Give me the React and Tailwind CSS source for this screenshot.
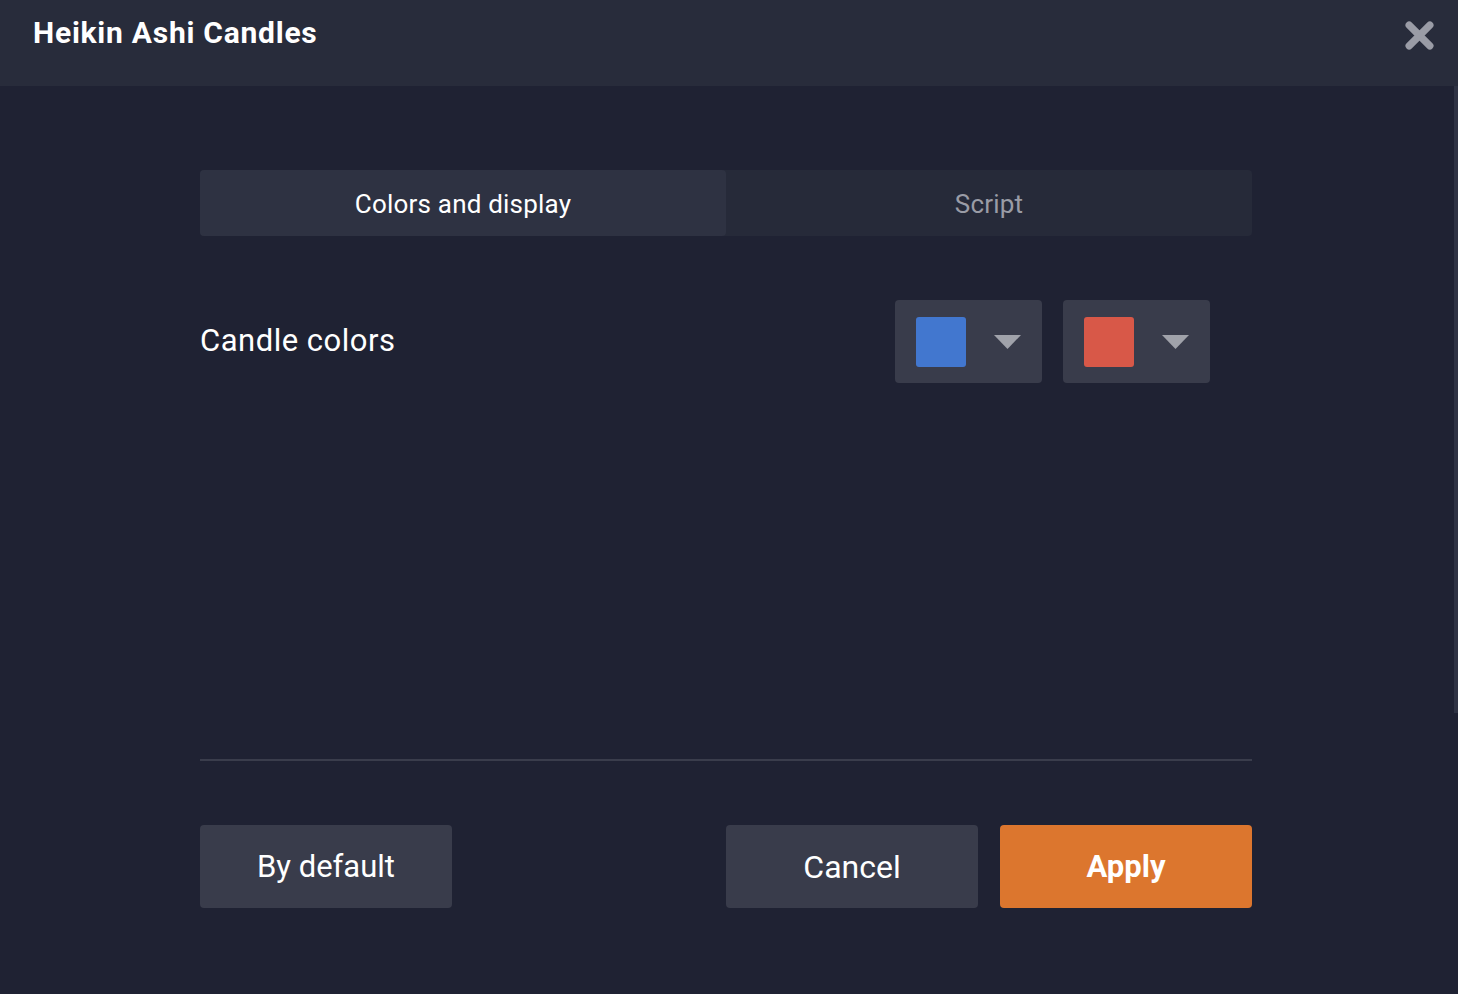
import React from "react";

function Swatch({ color }) {
  return (
    <div className="flex h-[83px] w-[147px] items-center rounded-[4px] bg-[#393c4b] pl-[21px]">
      <div className={`h-[50px] w-[50px] rounded-[3px] ${color}`} />
      <svg className="ml-[28px]" width="27" height="14" viewBox="0 0 27 14">
        <path d="M0 0 H27 L13.5 14 Z" fill="#a0a2aa" />
      </svg>
    </div>
  );
}

export default function App() {
  return (
    <div
      className="relative flex h-[994px] w-[1458px] flex-col overflow-hidden bg-[#1f2233] text-white"
      style={{ fontFamily: "Roboto, 'Liberation Sans', sans-serif" }}
    >
      <div className="flex h-[86px] shrink-0 items-start justify-between bg-[#282c3b] pl-[33px] pr-[24px]">
        <h1 className="mt-[13px] text-[30px] font-bold leading-[40px] tracking-[0.75px]">Heikin Ashi Candles</h1>
        <svg className="mt-[21px]" width="29" height="29" viewBox="0 0 28 28">
          <path d="M4 4 L24 24 M24 4 L4 24" stroke="#9a9ca6" strokeWidth="7" strokeLinecap="round" />
        </svg>
      </div>
      <div className="absolute right-0 top-[86px] h-[627px] w-[4px] bg-[#2f3344]" />
      <div className="flex flex-1 flex-col px-[200px] pr-[206px]">
        <div className="mt-[84px] flex h-[66px] rounded-[4px] bg-[#262a39]">
          <div className="flex flex-1 items-center justify-center rounded-[4px] bg-[#2e3242] pt-[2px] text-[26px] tracking-[0.2px] text-white">
            Colors and display
          </div>
          <div className="flex flex-1 items-center justify-center pt-[2px] text-[26px] tracking-[0.2px] text-[#9a9ca6]">Script</div>
        </div>
        <div className="mt-[64px] flex items-center justify-between pr-[42px]">
          <span className="text-[31px] tracking-[0.5px] text-white">Candle colors</span>
          <div className="flex gap-[21px]">
            <Swatch color="bg-[#4277cf]" />
            <Swatch color="bg-[#d85848]" />
          </div>
        </div>
        <div className="mt-[376px] h-[2px] bg-[#3a3d4c]" />
        <div className="mt-[64px] flex">
          <button className="flex h-[83px] w-[252px] items-center justify-center rounded-[4px] bg-[#393c4b] pt-[2px] text-[31px] text-white">
            By default
          </button>
          <div className="flex-1" />
          <button className="flex h-[83px] w-[252px] items-center justify-center rounded-[4px] bg-[#393c4b] text-[32px] text-white">
            Cancel
          </button>
          <button className="ml-[22px] flex h-[83px] w-[252px] items-center justify-center rounded-[4px] bg-[#dc762e] pt-[2px] text-[31px] font-bold text-white">
            Apply
          </button>
        </div>
      </div>
    </div>
  );
}
